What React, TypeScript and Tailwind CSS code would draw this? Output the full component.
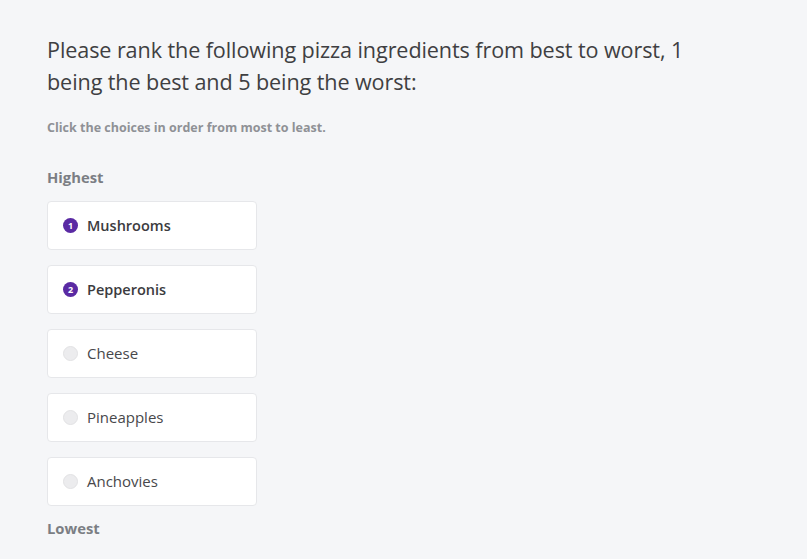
export default function App() {
  const choices = [
    { label: "Mushrooms", rank: 1 },
    { label: "Pepperonis", rank: 2 },
    { label: "Cheese", rank: 0 },
    { label: "Pineapples", rank: 0 },
    { label: "Anchovies", rank: 0 },
  ];

  return (
    <div
      className="min-h-[559px] bg-[#f5f6f8] px-[47px] pt-[34px]"
      style={{ fontFamily: "'Open Sans', Lato, sans-serif" }}
    >
      <h1 className="text-[21.6px] leading-[32px] font-normal tracking-[-0.1px] text-[#3f3f42]">
        Please rank the following pizza ingredients from best to worst, 1
        <br />
        being the best and 5 being the worst:
      </h1>
      <p className="mt-[21px] text-[12.5px] font-bold text-[#8f9196]">
        Click the choices in order from most to least.
      </p>
      <div className="mt-[28px] text-[14.8px] font-bold text-[#7b7e84]">Highest</div>
      <div className="mt-[13px] flex flex-col gap-[15px]">
        {choices.map((c) => (
          <div
            key={c.label}
            className="flex h-[49px] w-[210px] items-center gap-[9px] rounded-[4px] border border-[#e6e7ea] bg-white pl-[15px]"
          >
            {c.rank ? (
              <span className="flex h-[15px] w-[15px] items-center justify-center rounded-full bg-[#5a2aa3] text-[9px] font-bold leading-none text-white">
                {c.rank}
              </span>
            ) : (
              <span className="h-[15px] w-[15px] rounded-full border border-[#e2e2e4] bg-[#ececee]" />
            )}
            <span
              className={
                c.rank
                  ? "text-[14.5px] font-semibold text-[#3b3b3e]"
                  : "text-[15px] font-normal text-[#48484b]"
              }
            >
              {c.label}
            </span>
          </div>
        ))}
      </div>
      <div className="mt-[11px] text-[14.8px] font-bold text-[#7b7e84]">Lowest</div>
    </div>
  );
}
